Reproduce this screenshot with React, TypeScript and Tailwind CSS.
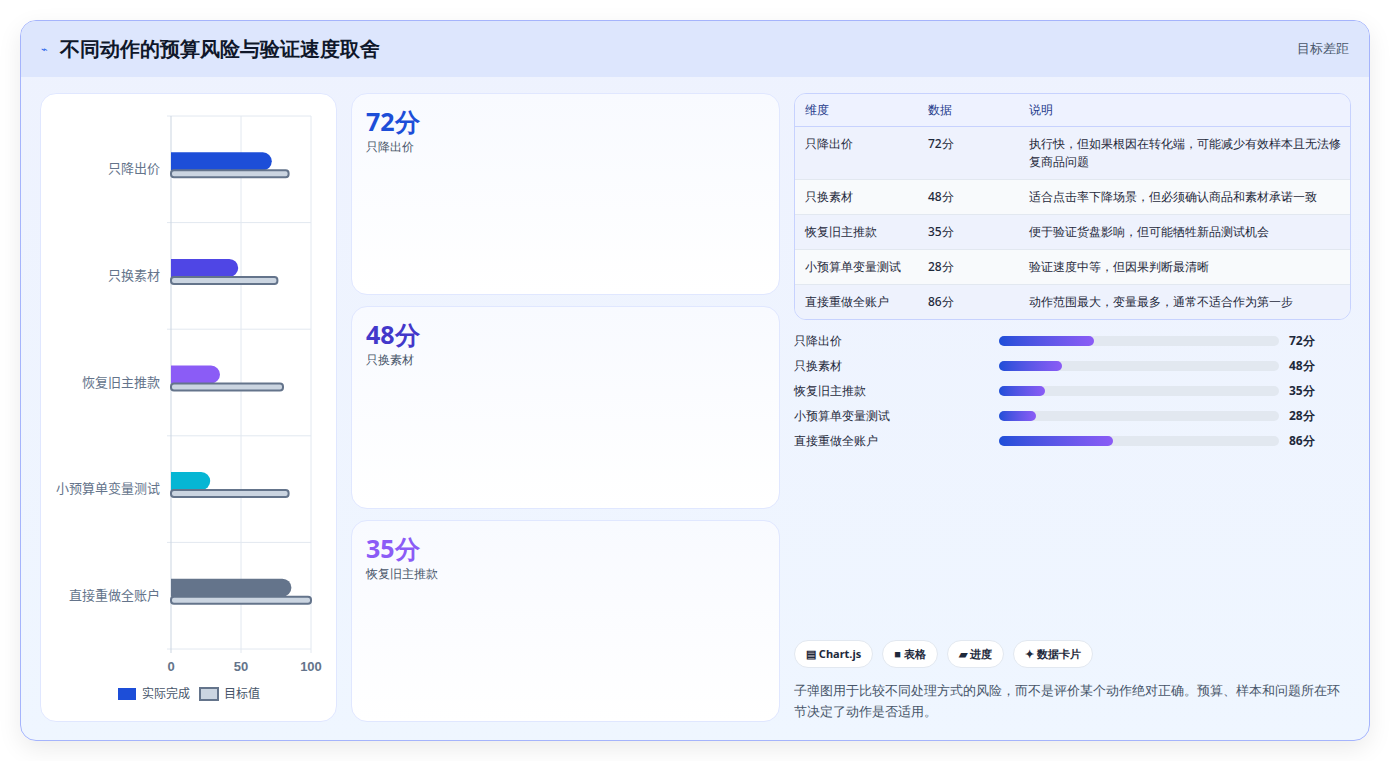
import React from "react";

const rows = [
  { name: "只降出价", v: 72, t: 84, c: "#1d4ed8" },
  { name: "只换素材", v: 48, t: 76, c: "#4f46e5" },
  { name: "恢复旧主推款", v: 35, t: 80, c: "#8b5cf6" },
  { name: "小预算单变量测试", v: 28, t: 84, c: "#06b6d4" },
  { name: "直接重做全账户", v: 86, t: 100, c: "#64748b" },
];
const table = [
  ["只降出价", "72分", "执行快，但如果根因在转化端，可能减少有效样本且无法修复商品问题"],
  ["只换素材", "48分", "适合点击率下降场景，但必须确认商品和素材承诺一致"],
  ["恢复旧主推款", "35分", "便于验证货盘影响，但可能牺牲新品测试机会"],
  ["小预算单变量测试", "28分", "验证速度中等，但因果判断最清晰"],
  ["直接重做全账户", "86分", "动作范围最大，变量最多，通常不适合作为第一步"],
];
const prog = [
  ["只降出价", 95, "72分"],
  ["只换素材", 63, "48分"],
  ["恢复旧主推款", 46, "35分"],
  ["小预算单变量测试", 37, "28分"],
  ["直接重做全账户", 114, "86分"],
] as const;

function Chart() {
  const x0 = 130, w = 140, y0 = 22, rh = 106.6;
  return (
    <svg width="296" height="627" viewBox="0 0 296 627" className="block">
      {[0, 1, 2, 3, 4, 5].map((i) => (
        <line key={"h" + i} x1={x0 - 4} x2={x0 + w} y1={y0 + i * rh} y2={y0 + i * rh} stroke="#e2e8f0" />
      ))}
      {[0, 50, 100].map((v, i) => (
        <line key={"v" + i} x1={x0 + v * 1.4} x2={x0 + v * 1.4} y1={y0} y2={y0 + 5 * rh + 4} stroke={v === 0 ? "#cbd5e1" : "#e2e8f0"} />
      ))}
      {rows.map((r, i) => {
        const cy = y0 + i * rh + rh / 2;
        return (
          <g key={r.name}>
            <text x={x0 - 11} y={cy + 4} textAnchor="end" fontSize="13" fill="#64748b" fontFamily="'Noto Sans CJK SC', sans-serif">{r.name}</text>
            <path d={`M${x0} ${cy - 17} H${x0 + r.v * 1.4 - 9} a9 9 0 0 1 9 9 v0 a9 9 0 0 1 -9 9 H${x0} Z`} fill={r.c} />
            <rect x={x0} y={cy + 1} width={r.t * 1.4} height={7} rx={3} fill="#cbd5e1" stroke="#64748b" strokeWidth="2" />
          </g>
        );
      })}
      {[0, 50, 100].map((v) => (
        <text key={v} x={x0 + v * 1.4} y={577} textAnchor="middle" fontSize="13" fill="#64748b" fontFamily="'Liberation Sans', sans-serif" fontWeight="bold">{v}</text>
      ))}
      <rect x={77} y={594} width={18} height={12} fill="#1d4ed8" />
      <text x={101} y={604} fontSize="12" fill="#475569" fontFamily="'Noto Sans CJK SC', sans-serif">实际完成</text>
      <rect x={159} y={594} width={18} height={12} fill="#cbd5e1" stroke="#64748b" strokeWidth="2" />
      <text x={183} y={604} fontSize="12" fill="#475569" fontFamily="'Noto Sans CJK SC', sans-serif">目标值</text>
    </svg>
  );
}

export default function App() {
  const cards = [
    ["72分", "只降出价", "text-[#1d4ed8]"],
    ["48分", "只换素材", "text-[#4338ca]"],
    ["35分", "恢复旧主推款", "text-[#8b5cf6]"],
  ];
  return (
    <div className="w-[1390px] h-[761px] bg-white pt-5 px-5 font-['Noto_Sans_CJK_SC','Noto_Sans',sans-serif]">
      <div className="h-[721px] rounded-2xl border border-[#a5b4fc] overflow-hidden shadow-[0_8px_24px_rgba(0,0,0,0.08)] bg-gradient-to-b from-[#eef2fe] to-[#eff6ff] flex flex-col">
        <div className="h-[56px] shrink-0 bg-[#dde6fd] flex items-center justify-between pl-[20px] pr-[20px]">
          <div className="flex items-center gap-3">
            <span className="text-[#2563eb] text-[11px]">⌁</span>
            <span className="text-[20px] font-bold text-[#0f172a]">不同动作的预算风险与验证速度取舍</span>
          </div>
          <span className="text-[13px] text-[#475569]">目标差距</span>
        </div>
        <div className="flex-1 flex gap-[14px] pt-[16px] pb-[19px] pl-[19px] pr-[18px]">
          <div className="w-[297px] shrink-0 bg-white rounded-2xl border border-[#e0e7ff]">
            <Chart />
          </div>
          <div className="w-[429px] shrink-0 flex flex-col gap-[11px]">
            {cards.map(([v, l, c]) => (
              <div key={l} className="flex-1 rounded-2xl border border-[#e0e7ff] bg-gradient-to-b from-[#f8faff] to-white px-[14px] pt-[10px]">
                <div className={`text-[25px] font-bold leading-[34px] ${c}`}>{v}</div>
                <div className="text-[12px] text-[#475569] font-medium">{l}</div>
              </div>
            ))}
          </div>
          <div className="flex-1 flex flex-col">
            <div className="rounded-xl border border-[#c7d2fe] overflow-hidden text-[12px] font-medium text-[#1e293b]">
              <div className="flex h-[33px] items-center bg-[#eef2ff] text-[#1e3a8a] border-b border-[#c7d2fe]">
                <div className="w-[133px] pl-[10px]">维度</div>
                <div className="w-[101px]">数据</div>
                <div className="flex-1">说明</div>
              </div>
              {table.map((r, i) => (
                <div key={r[0]} className={`flex py-[8px] ${i % 2 === 0 ? "bg-[#eef2fd]" : "bg-[#f8fafc]"} ${i < 4 ? "border-b border-[#e2e8f0]" : ""}`}>
                  <div className="w-[133px] pl-[10px] leading-[18px]">{r[0]}</div>
                  <div className="w-[101px] leading-[18px]">{r[1]}</div>
                  <div className="flex-1 leading-[18px] pr-2">{r[2]}</div>
                </div>
              ))}
            </div>
            <div className="flex flex-col gap-[7px] mt-[12px] text-[12px] font-medium text-[#1e293b]">
              {prog.map(([n, w, v]) => (
                <div key={n} className="flex items-center h-[18px]">
                  <div className="w-[205px]">{n}</div>
                  <div className="w-[280px] h-[10px] rounded-full bg-[#e2e8f0]">
                    <div className="h-full rounded-full bg-gradient-to-r from-[#1d4ed8] to-[#8b5cf6]" style={{ width: w }} />
                  </div>
                  <div className="ml-[10px] font-bold">{v}</div>
                </div>
              ))}
            </div>
            <div className="flex-1" />
            <div className="flex gap-[9px] text-[11px] font-bold text-[#1e293b]">
              {["▤ Chart.js", "■ 表格", "▰ 进度", "✦ 数据卡片"].map((t) => (
                <span key={t} className="h-[28px] px-[11px] flex items-center rounded-full bg-white border border-[#e2e8f0]">{t}</span>
              ))}
            </div>
            <p className="mt-[12px] text-[13px] leading-[21px] text-[#475569] font-medium">子弹图用于比较不同处理方式的风险，而不是评价某个动作绝对正确。预算、样本和问题所在环节决定了动作是否适用。</p>
          </div>
        </div>
      </div>
    </div>
  );
}
